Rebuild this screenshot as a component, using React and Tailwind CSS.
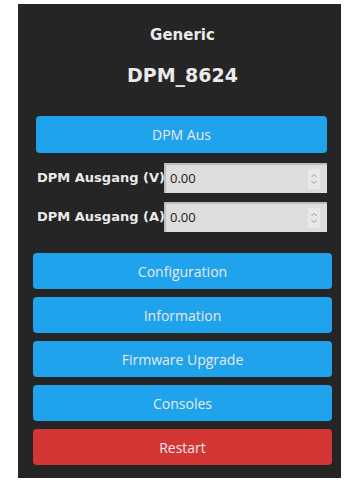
import React from "react";

function Spinner() {
  return (
    <div className="flex h-[20px] w-[12px] items-center justify-center bg-[#e8e8e8]">
      <svg width="8" height="14" viewBox="0 0 8 14" fill="none" stroke="#9a9a9a" strokeWidth="1">
        <path d="M1.5 5 L4 2.5 L6.5 5" />
        <path d="M1.5 9 L4 11.5 L6.5 9" />
      </svg>
    </div>
  );
}

function InputRow({ label, mt }) {
  return (
    <div className={`flex h-[30px] items-center ${mt}`}>
      <div className="w-[127px] shrink-0 whitespace-nowrap font-['DejaVu_Sans',sans-serif] text-[13px] font-bold text-[#eaeaea]">
        {label}
      </div>
      <div className="flex h-[30px] flex-1 items-center border-l-2 border-t-2 border-[#bdbdbd] bg-[#dddddd] pl-[4px] pr-[7px]">
        <span className="flex-1 font-['Open_Sans',sans-serif] text-[13px] text-[#1a1a1a]">0.00</span>
        <Spinner />
      </div>
    </div>
  );
}

function Btn({ children, red }) {
  return (
    <div
      className={`flex h-[36px] items-center justify-center rounded-[4px] font-['Open_Sans',sans-serif] text-[14px] text-[#eaeaea] ${
        red ? "bg-[#d43535]" : "bg-[#1fa3ec]"
      }`}
    >
      {children}
    </div>
  );
}

export default function App() {
  return (
    <div className="min-h-[488px] w-[355px] bg-white pt-[4px]">
      <div className="ml-[18px] flex h-[474px] w-[323px] flex-col bg-[#252525] pl-[15px] pr-[9px] pt-[21px]">
        <div className="h-[20px] text-center font-['DejaVu_Sans',sans-serif] text-[15px] font-bold leading-[20px] text-[#eaeaea]">
          Generic
        </div>
        <div className="mt-[16px] h-[28px] text-center font-['DejaVu_Sans',sans-serif] text-[19px] font-bold leading-[28px] text-[#eaeaea]">
          DPM_8624
        </div>
        <div className="mt-[27px] pl-[3px] pr-[5px]">
          <div className="flex h-[37px] items-center justify-center rounded-[4px] bg-[#1fa3ec] font-['Open_Sans',sans-serif] text-[14px] text-[#eaeaea]">
            DPM Aus
          </div>
          <div className="pl-[1px]">
            <InputRow label="DPM Ausgang (V)" mt="mt-[10px]" />
            <InputRow label="DPM Ausgang (A)" mt="mt-[9px]" />
          </div>
        </div>
        <div className="mt-[21px] flex flex-col gap-[8px]">
          <Btn>Configuration</Btn>
          <Btn>Information</Btn>
          <Btn>Firmware Upgrade</Btn>
          <Btn>Consoles</Btn>
          <Btn red>Restart</Btn>
        </div>
      </div>
    </div>
  );
}
